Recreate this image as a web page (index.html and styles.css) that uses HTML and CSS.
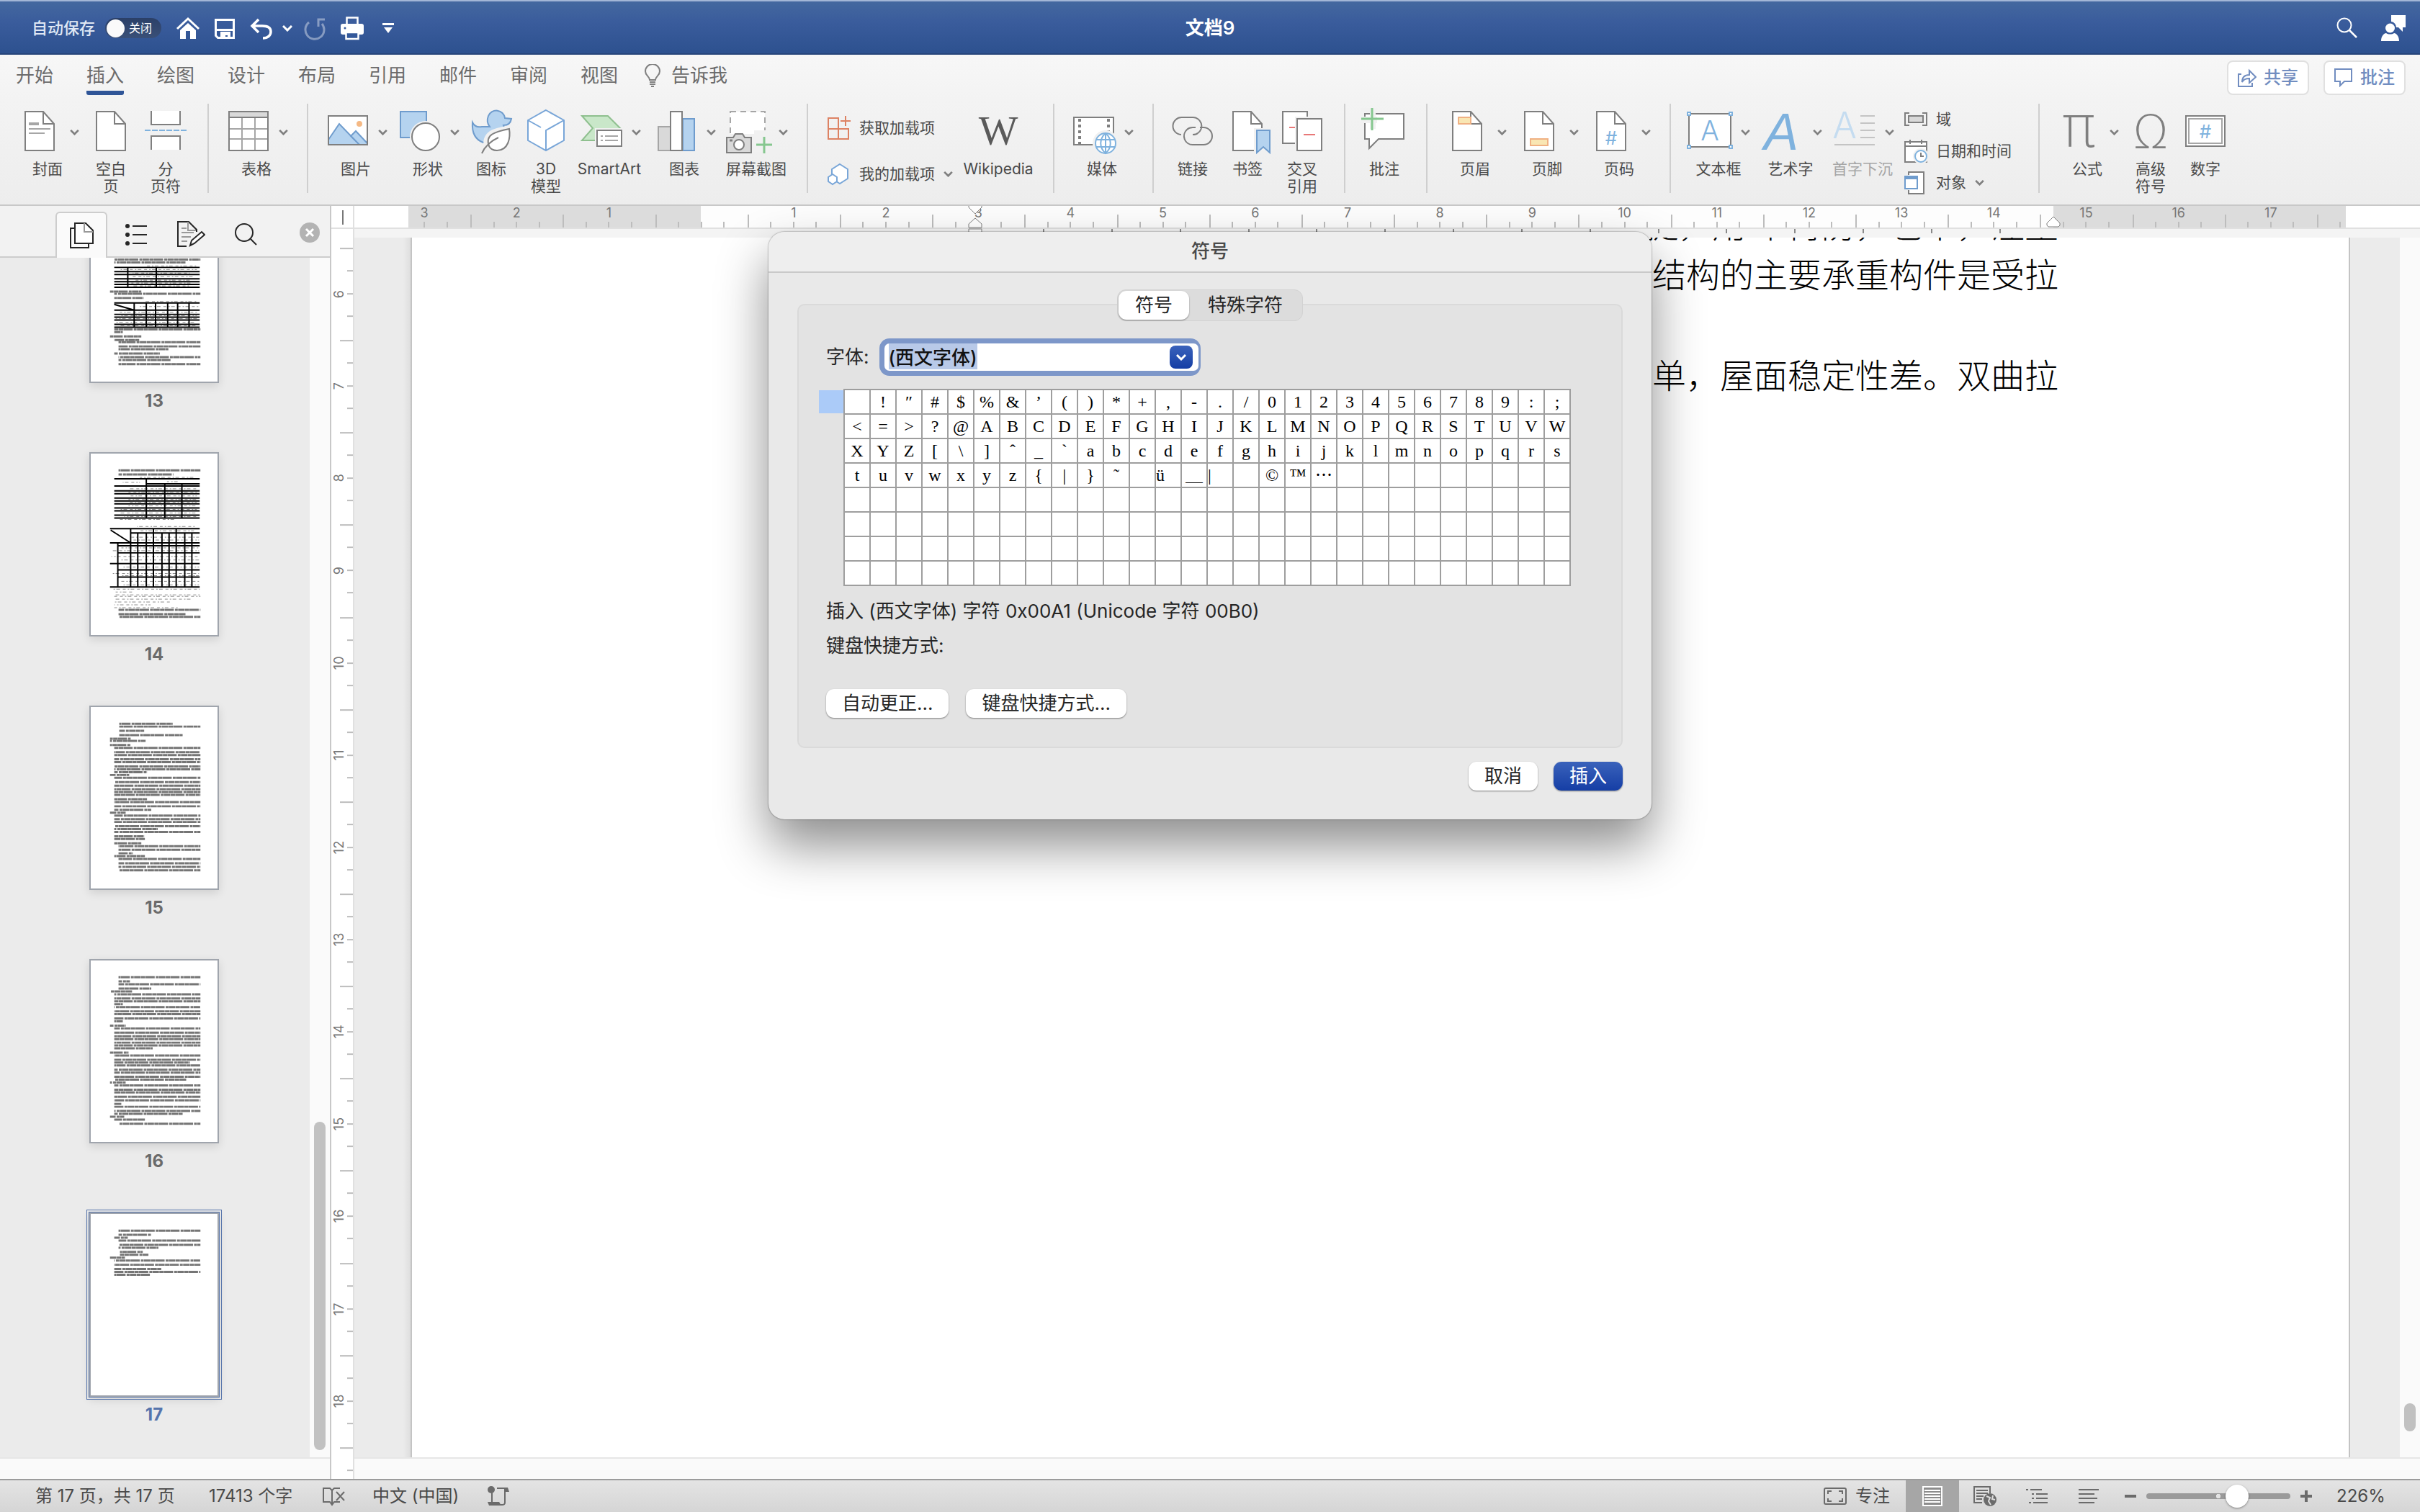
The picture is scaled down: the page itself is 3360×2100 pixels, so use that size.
FILE: index.html
```
<!DOCTYPE html>
<html lang="zh-CN">
<head>
    <meta charset="utf-8">
    <title>文档9</title>
    <meta name="viewport" content="width=device-width, initial-scale=1.0">
    <link rel="stylesheet" href="styles.css">
</head>
<body>
    <svg class="sprite" aria-hidden="true">
        <symbol id="chev" viewBox="0 0 14 9"><path d="M1 1l6 6 6-6" fill="none" stroke="currentColor" stroke-width="3"/></symbol>
        <symbol id="page" viewBox="0 0 56 64"><path d="M8 3h25l15 17v37H8z" fill="#fff" stroke="#7f7f7f" stroke-width="2"/><path d="M33 3v17h15" fill="none" stroke="#7f7f7f" stroke-width="2"/></symbol>
    </svg>

    <header class="titlebar">
        <label class="autosave" for="autosave">自动保存</label>
        <span class="switch"><input type="checkbox" id="autosave"><span>关闭</span></span>
        <button class="tb" aria-label="主页"><svg width="34" height="34" viewBox="0 0 34 34"><path d="M2 18L17 4l15 14" fill="none" stroke="#fff" stroke-width="3"/><path d="M6 20l11-10 11 10v12h-8V21h-6v11H6z" fill="#fff"/></svg></button>
        <button class="tb" aria-label="保存"><svg width="34" height="34" viewBox="0 0 34 34"><path d="M4.500 5.500h25v25h-22l-3-3z" fill="none" stroke="#fff" stroke-width="3"/><path d="M4 18h26v3H4zM11 22h14v10h-4v-5h-3v5h-7z" fill="#fff"/></svg></button>
        <button class="tb" aria-label="撤消"><svg width="34" height="34" viewBox="0 0 34 34"><path d="M13 5L4 14l9 9M4 14h14c8 0 12 3 12 8s-4 9-11 9" fill="none" stroke="#fff" stroke-width="3.500"/></svg></button>
        <button class="tb-chev" aria-label="撤消列表"><svg width="14" height="9"><use href="#chev"/></svg></button>
        <button class="tb dim" aria-label="重做"><svg width="34" height="34" viewBox="0 0 34 34"><path d="M8 9a13 13 0 1 0 18 2M30 5h-9v10" fill="none" stroke="#fff" stroke-width="3"/></svg></button>
        <button class="tb" aria-label="打印"><svg width="34" height="34" viewBox="0 0 34 34"><path d="M9.500 12V2.500h15V12" fill="none" stroke="#fff" stroke-width="2.500"/><rect x="1" y="11" width="32" height="15" rx="3" fill="#fff"/><rect x="8.500" y="23" width="17" height="9" fill="#33589a" stroke="#fff" stroke-width="2.500"/><circle cx="7" cy="17" r="1.500" fill="#33589a"/></svg></button>
        <button class="tb-more" aria-label="自定义工具栏"><svg width="16" height="16" viewBox="0 0 16 16"><path d="M0 1h16v3H0zM2 7h12l-6 8z" fill="#fff"/></svg></button>
        <h1>文档9</h1>
        <button class="tb-right" aria-label="搜索"><svg width="30" height="30" viewBox="0 0 30 30"><circle cx="11" cy="11" r="9.500" fill="none" stroke="#fff" stroke-width="2"/><path d="M18 18l10 10" stroke="#fff" stroke-width="2.500"/></svg></button>
        <button class="tb-right" aria-label="联系人"><svg width="36" height="38" viewBox="0 0 36 38"><path d="M14 1h20v17h-4v6l-6-6h-3a8 8 0 0 0-7-8z" fill="#fff"/><circle cx="12.500" cy="19" r="6.500" fill="#fff"/><path d="M0 37c0-7 4-11 7-11 3 2 8 2 11 0 3 0 7 4 7 11z" fill="#fff"/></svg></button>
    </header>

    <section class="ribbon">
        <nav class="tabs">
            <a href="#">开始</a>
            <a href="#" class="active">插入</a>
            <a href="#">绘图</a>
            <a href="#">设计</a>
            <a href="#">布局</a>
            <a href="#">引用</a>
            <a href="#">邮件</a>
            <a href="#">审阅</a>
            <a href="#">视图</a>
            <a href="#" class="tell"><svg width="24" height="32" viewBox="0 0 24 32"><path d="M8 22c0-5-6-6-6-12a10 10 0 0 1 20 0c0 6-6 7-6 12z" fill="none" stroke="#7f7f7f" stroke-width="2"/><path d="M8 25h8M8 28h8M10 31h4" stroke="#7f7f7f" stroke-width="2"/></svg>告诉我</a>
            <span class="spacer"></span>
            <button class="pill"><svg width="26" height="26" viewBox="0 0 26 26"><path d="M5 8H1v17h19v-5M6 19c0-7 4-10 10-10V3l9 9-9 8v-6c-5 0-8 1-10 5z" fill="none" stroke="currentColor" stroke-width="2"/></svg>共享</button>
            <button class="pill"><svg width="26" height="26" viewBox="0 0 26 26"><path d="M1 1h23v17H14l-6 6v-6H1z" fill="none" stroke="currentColor" stroke-width="2"/></svg>批注</button>
        </nav>

        <div class="tools">
            <div class="group">
                <button class="tool drop"><svg class="ico"><use href="#page"/><path d="M13 20h14" stroke="#a6a6a6" stroke-width="4"/><path d="M13 27h30M13 33h22" stroke="#a6a6a6" stroke-width="2"/></svg><svg class="chev"><use href="#chev"/></svg><span>封面</span></button>
                <button class="tool"><svg class="ico"><use href="#page"/></svg><span>空白<br>页</span></button>
                <button class="tool"><svg class="ico"><path d="M8 2v19h40V2M8 56V37h40v19" fill="#fff" stroke="#7f7f7f" stroke-width="2"/><path d="M-1 29h58" stroke="#7fb2de" stroke-width="2" stroke-dasharray="8 2"/></svg><span>分<br>页符</span></button>
            </div>
            <div class="group">
                <button class="tool drop"><svg class="ico"><rect x="1" y="3" width="54" height="54" fill="#fff"/><path d="M1 3h54v8H1z" fill="#d9d9d9"/><path d="M19 11v46M37 11v46M1 27h54M1 41h54" stroke="#a6a6a6" stroke-width="2"/><path d="M1 3h54v54H1zM1 11h54" fill="none" stroke="#7f7f7f" stroke-width="2"/></svg><svg class="chev"><use href="#chev"/></svg><span>表格</span></button>
            </div>
            <div class="group">
                <button class="tool drop"><svg class="ico"><rect x="1" y="9" width="54" height="40" fill="#fff"/><circle cx="44" cy="20" r="4" fill="#f5b985"/><path d="M1 42l15-22 28 29H1zM32 37l7-7 16 17v2H44z" fill="#b5d3ef" stroke="#6f9ccd" stroke-width="2"/><rect x="1" y="9" width="54" height="40" fill="none" stroke="#7f7f7f" stroke-width="2"/></svg><svg class="chev"><use href="#chev"/></svg><span>图片</span></button>
                <button class="tool drop"><svg class="ico"><rect x="1" y="3" width="36" height="36" fill="#b5d3ef" stroke="#6f9ccd" stroke-width="2"/><circle cx="36" cy="38" r="22" fill="#f1f1f1"/><circle cx="36" cy="38" r="19" fill="#fff" stroke="#7f7f7f" stroke-width="2"/></svg><svg class="chev"><use href="#chev"/></svg><span>形状</span></button>
                <button class="tool"><svg class="ico"><path d="M2 18c3 6 8 7 13 6h11c-4-5-4-10-2-15a12 12 0 0 1 23 3l9 1c-1 6-5 9-11 9 3 8 2 14-4 18L17 46C6 42 1 32 2 18z" fill="#b5d3ef" stroke="#6f9ccd" stroke-width="2"/><path d="M22 52c-4-18 10-23 31-25 2 12-1 30-17 30-5 0-9-2-11-5" fill="#fff" stroke="#f1f1f1" stroke-width="8"/><path d="M25 51c-6-16 8-20 28-24 2 12-1 30-17 30-5 0-9-2-11-6z" fill="#fff" stroke="#7f7f7f" stroke-width="2"/><path d="M15 61c4-9 12-17 23-22" fill="none" stroke="#7f7f7f" stroke-width="2"/></svg><span>图标</span></button>
                <button class="tool"><svg class="ico"><path d="M28 1l25 14v28L28 57 3 43V15z" fill="#fff" stroke="#79a6d8" stroke-width="2"/><path d="M3 15l18 10M28 57V29l25-14" fill="none" stroke="#79a6d8" stroke-width="2"/></svg><span>3D<br>模型</span></button>
                <button class="tool drop wide"><svg class="ico"><path d="M1 9h36l17 17-17 17H1l15-17z" fill="#c9e7c9" stroke="#8fc08f" stroke-width="2"/><rect x="19" y="26" width="41" height="28" fill="#f1f1f1"/><rect x="22" y="29" width="34" height="22" fill="#fff" stroke="#7f7f7f" stroke-width="2"/><path d="M27 37h3M33 37h18M27 43h3M33 43h18" stroke="#a6a6a6" stroke-width="2"/></svg><svg class="chev"><use href="#chev"/></svg><span>SmartArt</span></button>
                <button class="tool drop"><svg class="ico"><rect x="3" y="24" width="17" height="33" fill="#d9d9d9" stroke="#a6a6a6" stroke-width="2"/><rect x="37" y="13" width="16" height="44" fill="#b5d3ef" stroke="#6f9ccd" stroke-width="2"/><rect x="20" y="3" width="16" height="54" fill="#fff" stroke="#7f7f7f" stroke-width="2"/></svg><svg class="chev"><use href="#chev"/></svg><span>图表</span></button>
                <button class="tool drop"><svg class="ico"><path d="M3 3h48v44H3z" fill="#fff" stroke="#a6a6a6" stroke-width="2" stroke-dasharray="8 6"/><path d="M-5 34h41v-5h20v30H-5z" fill="#f1f1f1"/><path d="M-2 39h9l3-5h10l3 5h9v21H-2z" fill="#d9d9d9" stroke="#7f7f7f" stroke-width="2"/><circle cx="15" cy="49" r="7" fill="#fff" stroke="#7f7f7f" stroke-width="2"/><path d="M2 43h4" stroke="#7f7f7f" stroke-width="3"/><path d="M50 38v23M39 49h22" stroke="#86c78f" stroke-width="3"/></svg><svg class="chev"><use href="#chev"/></svg><span>屏幕截图</span></button>
            </div>
            <div class="group">
                <div class="stack two">
                    <button class="row"><svg width="32" height="34" viewBox="0 0 32 34"><path d="M1 3h14v15H1zM1 18h14v14H1zM15 18h14v14H15zM25 0v14M18 7h14" fill="none" stroke="#dd8263" stroke-width="2"/></svg>获取加载项</button>
                    <button class="row"><svg width="32" height="34" viewBox="0 0 32 34"><path d="M17 3l11 7v13l-11 7-11-7V10z" fill="#fff" stroke="#79a6d8" stroke-width="2"/><path d="M7 17l6 4v6l-6 4-6-4v-6z" fill="#fff" stroke="#79a6d8" stroke-width="2"/></svg>我的加载项<svg class="chev"><use href="#chev"/></svg></button>
                </div>
                <button class="tool wiki"><svg class="ico"><text x="28" y="49" font-size="58" text-anchor="middle" class="serif">W</text></svg><span>Wikipedia</span></button>
            </div>
            <div class="group">
                <button class="tool drop"><svg class="ico"><rect x="0" y="11" width="55" height="38" fill="#fff" stroke="#7f7f7f" stroke-width="2"/><path d="M8 13v36M48 13v20" stroke="#7f7f7f" stroke-width="4" stroke-dasharray="4 4"/><circle cx="44" cy="47" r="18" fill="#f1f1f1"/><circle cx="44" cy="47" r="14" fill="#fff" stroke="#7fb2de" stroke-width="2"/><path d="M44 33v28M31 42h26M31 52h26M44 33c-9 8-9 20 0 28 9-8 9-20 0-28" fill="none" stroke="#7fb2de" stroke-width="2"/></svg><svg class="chev"><use href="#chev"/></svg><span>媒体</span></button>
            </div>
            <div class="group">
                <button class="tool"><svg class="ico"><g fill="none" stroke="#7f7f7f" stroke-width="2"><path d="M12 35a12 12 0 0 1 1-24h15a12 12 0 0 1 7 22q-2 2-7 2"/><path d="M38 25h5a12 12 0 0 1 0 24H28a12 12 0 0 1-8-21q3-3 8-3h4"/></g></svg><span>链接</span></button>
                <button class="tool"><svg class="ico"><use href="#page"/><path d="M37 26h26v32H37z" fill="#f1f1f1"/><path d="M41 29h18v31l-9-8-9 8z" fill="#b5d3ef" stroke="#6f9ccd" stroke-width="2"/></svg><span>书签</span></button>
                <button class="tool"><svg class="ico"><rect x="1" y="3" width="34" height="44" fill="#fff" stroke="#7f7f7f" stroke-width="2"/><path d="M18 10h22v40H18z" fill="#f1f1f1"/><rect x="21" y="13" width="34" height="44" fill="#fff" stroke="#7f7f7f" stroke-width="2"/><path d="M10 25h8M30 35h16" stroke="#e87878" stroke-width="2"/></svg><span>交叉<br>引用</span></button>
            </div>
            <div class="group">
                <button class="tool"><svg class="ico"><path d="M1 6h54v35H20L7 54V41H1z" fill="#fff" stroke="#7f7f7f" stroke-width="2"/><path d="M-4 3h22v-5h-22zM-4 10h22v9H-4zM8 3h8v24H8z" fill="#f1f1f1"/><path d="M11-2v31M-4 13h31" stroke="#86c78f" stroke-width="3"/></svg><span>批注</span></button>
            </div>
            <div class="group">
                <button class="tool drop"><svg class="ico"><use href="#page"/><path d="M16 11h17v9H16z" fill="#f9e6b3" stroke="#f0b183" stroke-width="2"/></svg><svg class="chev"><use href="#chev"/></svg><span>页眉</span></button>
                <button class="tool drop"><svg class="ico"><use href="#page"/><path d="M16 41h24v9H16z" fill="#f9e6b3" stroke="#f0b183" stroke-width="2"/></svg><svg class="chev"><use href="#chev"/></svg><span>页脚</span></button>
                <button class="tool drop"><svg class="ico"><use href="#page"/><text x="28" y="49" font-size="26" text-anchor="middle" class="blue">#</text></svg><svg class="chev"><use href="#chev"/></svg><span>页码</span></button>
            </div>
            <div class="group">
                <button class="tool drop"><svg class="ico"><rect x="-2" y="6" width="58" height="46" fill="#fff" stroke="#7f7f7f" stroke-width="2"/><text x="27" y="43" font-size="38" text-anchor="middle" class="blue thin">A</text><path d="M-4 4h4v4h-4zM54 4h4v4h-4zM-4 50h4v4h-4zM54 50h4v4h-4z" fill="#fff" stroke="#7fb2de" stroke-width="2"/></svg><svg class="chev"><use href="#chev"/></svg><span>文本框</span></button>
                <button class="tool drop"><svg class="ico"><text x="26" y="56" font-size="72" text-anchor="middle" class="blue art">A</text></svg><svg class="chev"><use href="#chev"/></svg><span>艺术字</span></button>
                <button class="tool drop" disabled><svg class="ico"><text x="14" y="40" font-size="50" text-anchor="middle" class="pale thin">A</text><path d="M36 9h20M36 19h20M36 29h20M36 39h20M0 49h56" stroke="#c4c4c4" stroke-width="2"/></svg><svg class="chev"><use href="#chev"/></svg><span>首字下沉</span></button>
                <div class="stack three">
                    <button class="row"><svg width="32" height="34" viewBox="0 0 32 34"><path d="M7 8H1v17h6M25 8h6v17h-6" fill="none" stroke="#7f7f7f" stroke-width="2"/><rect x="6" y="12" width="20" height="9" fill="#d9d9d9" stroke="#7f7f7f" stroke-width="2"/></svg>域</button>
                    <button class="row"><svg width="32" height="34" viewBox="0 0 32 34"><path d="M1 4h30v28H1z" fill="#fff" stroke="#7f7f7f" stroke-width="2"/><path d="M1 10h30M8 1v6M24 1v6" stroke="#7f7f7f" stroke-width="2"/><circle cx="23" cy="24" r="11" fill="#f1f1f1"/><circle cx="23" cy="24" r="8" fill="#fff" stroke="#7fb2de" stroke-width="2"/><path d="M23 19v5h4" fill="none" stroke="#7f7f7f" stroke-width="2"/></svg>日期和时间</button>
                    <button class="row"><svg width="32" height="34" viewBox="0 0 32 34"><path d="M6 6V2h21v30H6v-5" fill="#fff" stroke="#7f7f7f" stroke-width="2"/><rect x="1" y="8" width="17" height="17" fill="#fff" stroke="#6f9ccd" stroke-width="2"/><path d="M1 10h17" stroke="#6f9ccd" stroke-width="4"/></svg>对象<svg class="chev"><use href="#chev"/></svg></button>
                </div>
            </div>
            <div class="group last">
                <button class="tool drop"><svg class="ico"><text x="27" y="52" font-size="80" text-anchor="middle" class="greek">π</text></svg><svg class="chev"><use href="#chev"/></svg><span>公式</span></button>
                <button class="tool"><svg class="ico"><text x="28" y="54" font-size="64" text-anchor="middle" class="greek">Ω</text></svg><span>高级<br>符号</span></button>
                <button class="tool"><svg class="ico"><rect x="1" y="9" width="54" height="42" fill="#fff" stroke="#7f7f7f" stroke-width="2"/><rect x="5" y="13" width="46" height="34" fill="none" stroke="#a6a6a6" stroke-width="2"/><text x="28" y="40" font-size="26" text-anchor="middle" class="blue">#</text></svg><span>数字</span></button>
            </div>
        </div>
    </section>

    <main class="workspace">
        <aside class="sidebar">
            <div class="side-tabs">
                <button class="side-tab active" aria-label="缩略图"><svg width="36" height="38" viewBox="0 0 36 38"><path d="M9 9H3v27h25v-5" fill="none" stroke="#262626" stroke-width="2"/><path d="M9 2h15l10 10v18H9z" fill="#fff" stroke="#262626" stroke-width="2"/><path d="M22 2v12h12" fill="none" stroke="#999" stroke-width="2"/></svg></button>
                <button class="side-tab" aria-label="文档结构"><svg width="36" height="38" viewBox="0 0 36 38"><path d="M13 8h20M13 20h20M13 32h20" stroke="#262626" stroke-width="2"/><circle cx="6" cy="8" r="3" fill="#262626"/><circle cx="6" cy="20" r="3" fill="#262626"/><circle cx="6" cy="32" r="3" fill="#262626"/></svg></button>
                <button class="side-tab" aria-label="审阅"><svg width="40" height="38" viewBox="0 0 40 38"><path d="M14 36H2V2h15l11 11v3" fill="none" stroke="#262626" stroke-width="2"/><path d="M16 2v12h11M7 11h7M7 17h17M7 23h13M7 29h8" fill="none" stroke="#999" stroke-width="2"/><path d="M19 35l2-7 14-12 4 4-14 12z" fill="#fff" stroke="#262626" stroke-width="2"/></svg></button>
                <button class="side-tab" aria-label="查找"><svg width="36" height="38" viewBox="0 0 36 38"><circle cx="16" cy="17" r="12" fill="none" stroke="#262626" stroke-width="2"/><path d="M25 26l8 8" stroke="#262626" stroke-width="2"/></svg></button>
                <button class="side-close" aria-label="关闭"><svg width="28" height="28" viewBox="0 0 28 28"><circle cx="14" cy="14" r="14" fill="#b3b3b3"/><path d="M9 9l10 10M19 9L9 19" stroke="#fff" stroke-width="3"/></svg></button>
            </div>
            <div class="side-body">
                <div class="thumbs" id="thumbs"></div>
                <div class="vscroll"><i></i></div>
            </div>
            <div class="hscroll"></div>
        </aside>

        <div class="vruler">
            <div class="corner"></div>
            <div class="vscale" id="vscale"></div>
        </div>

        <div class="editor">
            <div class="hruler">
                <div class="zones"><i class="out"></i><i class="in"></i><i class="out"></i></div>
                <div class="clip">
                    <div class="hscale" id="hscale"></div>
                </div>
                <svg class="marker indent" width="20" height="36" viewBox="0 0 20 36"><path d="M1-1v3l9 9 9-9v-3z" fill="#fff" stroke="#7f7f7f"/><path d="M10 17l9 8v5H1v-5zM1 32h18v8H1z" fill="#fff" stroke="#7f7f7f"/></svg>
                <svg class="marker right" width="20" height="16" viewBox="0 0 20 16"><path d="M10 1l9 9v3l-2 2H3l-2-2v-3z" fill="#fff" stroke="#7f7f7f"/></svg>
            </div>
            <div class="tabstops" id="tabstops"></div>
            <div class="canvas">
                <article class="sheet">
                    <p>，提，用 中再防，也不，注重</p>
                    <p>结构的主要承重构件是受拉</p>
                    <p>&nbsp;</p>
                    <p>简单，屋面稳定性差。双曲拉</p>
                </article>
                <div class="vscroll doc"><i></i></div>
            </div>
            <div class="hscroll"></div>
        </div>
    </main>

    <footer class="status">
        <span class="pages">第 17 页，共 17 页</span>
        <span class="words">17413 个字</span>
        <svg class="proof" width="32" height="28" viewBox="0 0 32 28"><path d="M24 3h-8l-3 3-3-3H1v19h9l3 4 3-4h8M13 6v19M19 8l11 12M30 8L19 20" fill="none" stroke="#6b6b6b" stroke-width="2"/></svg>
        <span class="lang">中文 (中国)</span>
        <svg width="32" height="30" viewBox="0 0 32 30"><circle cx="6" cy="6" r="5" fill="#6b6b6b"/><path d="M7 10v13M14 4h14v4M25 4v20q0 3-4 3H4" fill="none" stroke="#6b6b6b" stroke-width="2"/><path d="M1 23h16l3 5H3zM24 3h5l2 6h-5z" fill="#6b6b6b"/></svg>
        <span class="spacer"></span>
        <button class="focus"><svg width="32" height="24" viewBox="0 0 32 24"><rect x="1" y="1" width="30" height="22" rx="2" fill="none" stroke="#6b6b6b" stroke-width="2"/><path d="M6 9V5h5M21 5h5v4M6 15v4h5M21 19h5v-4" fill="none" stroke="#6b6b6b" stroke-width="2"/></svg>专注</button>
        <button class="view on" aria-label="页面视图"><svg width="32" height="30" viewBox="0 0 32 30"><path d="M3 2h26v26H3z" fill="#8c8c8c" stroke="#fff" stroke-width="2"/><path d="M5 7h22M5 11h22M5 15h22M5 19h22M5 23h22" stroke="#fff" stroke-width="2"/></svg></button>
        <button class="view" aria-label="Web 版式"><svg width="32" height="30" viewBox="0 0 32 30"><path d="M12 24H1V2h22v9" fill="none" stroke="#6b6b6b" stroke-width="2"/><path d="M4 7h16M4 11h16M4 15h10M4 19h8" stroke="#6b6b6b" stroke-width="2"/><circle cx="23" cy="20" r="9" fill="#6b6b6b"/><path d="M18 15l5 2-2 5 3 5M27 14l-1 5 4 1" fill="none" stroke="#dedede" stroke-width="2"/></svg></button>
        <button class="view" aria-label="大纲"><svg width="32" height="30" viewBox="0 0 32 30"><path d="M1 6h3M7 6h16M9 12h3M15 12h16M9 18h3M15 18h16M5 24h3M11 24h20" stroke="#6b6b6b" stroke-width="2"/></svg></button>
        <button class="view" aria-label="草稿"><svg width="32" height="30" viewBox="0 0 32 30"><path d="M2 6h28M2 12h22M2 18h26M2 24h22" stroke="#6b6b6b" stroke-width="2"/></svg></button>
        <button class="zoom-btn" aria-label="缩小"><svg width="16" height="16"><path d="M0 8h16" stroke="#6b6b6b" stroke-width="4"/></svg></button>
        <input type="range" class="zoom" min="10" max="340" value="226" aria-label="缩放">
        <button class="zoom-btn" aria-label="放大"><svg width="16" height="16"><path d="M0 8h16M8 0v16" stroke="#6b6b6b" stroke-width="4"/></svg></button>
        <span class="percent">226%</span>
    </footer>

    <div class="dialog" role="dialog" aria-labelledby="dlg-title">
        <h2 id="dlg-title">符号</h2>
        <div class="box">
            <div class="seg">
                <button class="on">符号</button>
                <button>特殊字符</button>
            </div>
            <div class="font-row">
                <label for="font">字体:</label>
                <div class="combo">
                    <input type="text" id="font" value="(西文字体)">
                    <button aria-label="选择字体"><svg width="14" height="9"><use href="#chev"/></svg></button>
                </div>
            </div>
            <div class="symbols">
                <i class="picked"></i>
                <table id="symbols"></table>
            </div>
            <p>插入 (西文字体) 字符 0x00A1 (Unicode 字符 00B0)</p>
            <p>键盘快捷方式:</p>
            <div class="btns">
                <button class="btn">自动更正...</button>
                <button class="btn">键盘快捷方式...</button>
            </div>
        </div>
        <div class="actions">
            <button class="btn">取消</button>
            <button class="btn primary">插入</button>
        </div>
    </div>

    <script src="main.js"></script>
</body>
</html>
```

FILE: styles.css
```
* {
    box-sizing: border-box;
}

body {
    margin: 0;
    height: 100vh;
    display: flex;
    flex-direction: column;
    overflow: hidden;
    position: relative;
    font-family: Inter, "Noto Sans CJK SC", sans-serif;
    color: #4a4a4a;
    background: #ebebeb;
}

button {
    margin: 0;
    padding: 0;
    border: none;
    background: none;
    font: inherit;
    color: inherit;
}

.sprite {
    position: absolute;
    width: 0;
    height: 0;
}

.spacer {
    flex: 1;
}

/* title bar */
.titlebar {
    height: 76px;
    flex: none;
    display: flex;
    align-items: center;
    padding: 4px 18px 2px 44px;
    position: relative;
    color: #fff;
    background: linear-gradient(#44689f, #3a5c9c 40%, #2d518f);
    border-top: 2px solid #a3b6d6;
    border-bottom: 2px solid #27447a;
}

.autosave {
    width: 102px;
    font-size: 22px;
    font-weight: 500;
    line-height: 32px;
    color: #dfe7f4;
}

.switch {
    width: 78px;
    height: 28px;
    display: flex;
    align-items: center;
    margin-right: 20px;
    padding-left: 2px;
    border-radius: 14px;
    background: linear-gradient(#2b4068, #3a5078);
    font-size: 16px;
    line-height: 24px;
}

.switch input {
    appearance: none;
    width: 25px;
    height: 25px;
    margin: 0 6px 0 0;
    border-radius: 50%;
    background: #fafafa;
}

.tb {
    width: 34px;
    height: 34px;
    margin-right: 17px;
}

.tb svg,
.tb-chev svg,
.tb-more svg,
.tb-right svg {
    display: block;
}

.tb:nth-of-type(3) {
    margin-right: 12px;
}

.tb-chev {
    margin-right: 15px;
}

.tb-more {
    margin-left: 8px;
}

.dim {
    opacity: .4;
}

.titlebar h1 {
    position: absolute;
    left: 0;
    right: 0;
    margin: 0;
    text-align: center;
    font-size: 26px;
    font-weight: 600;
    line-height: 36px;
    pointer-events: none;
}

.tb-right {
    margin-left: 32px;
}

.tb-more + h1 + .tb-right {
    margin-left: auto;
}

/* ribbon */
.ribbon {
    flex: none;
    background: linear-gradient(#f7f7f7, #f3f3f3 30%, #ededed);
    border-bottom: 2px solid #c8c8c8;
}

.tabs {
    height: 68px;
    display: flex;
    align-items: flex-start;
    padding: 0 20px 0 22px;
    font-size: 26px;
    line-height: 36px;
    color: #666;
}

.tabs a {
    width: 52px;
    margin-right: 46px;
    padding: 11px 0 3px;
    color: #6b6b6b;
    text-decoration: none;
    white-space: nowrap;
    border-bottom: 6px solid transparent;
}

.tabs .active {
    border-color: #2f5597;
    border-radius: 3px;
}

.tabs .tell {
    width: auto;
    display: flex;
    align-items: center;
    gap: 14px;
    margin-left: -10px;
}

.pill {
    width: 114px;
    height: 48px;
    display: flex;
    align-items: center;
    justify-content: center;
    gap: 10px;
    margin: 8px 0 0 20px;
    font-size: 24px;
    font-weight: 500;
    color: #718dc0;
    background: #fff;
    border: 2px solid #e0e0e0;
    border-radius: 8px;
}

.tools {
    height: 140px;
    display: flex;
    padding-bottom: 16px;
}

.group {
    display: flex;
    height: 124px;
    padding: 0 20px 0 16px;
    border-right: 2px solid #cfcfcf;
}

.group.last {
    border: none;
}

.tool {
    width: 76px;
    display: grid;
    grid-template-columns: 56px;
    grid-template-rows: 64px auto;
    row-gap: 7px;
    align-content: start;
    justify-content: center;
    padding-top: 8px;
    font-size: 21px;
    line-height: 24px;
}

.tool.drop {
    width: 100px;
    grid-template-columns: 56px 13px;
    column-gap: 14px;
    justify-content: start;
    padding-left: 11px;
}

.tool.wide {
    width: 104px;
}

.tool span {
    grid-column: 1 / -1;
    justify-self: center;
    white-space: nowrap;
    display: flow-root;
}

.tool.drop span {
    margin-left: -5px;
}

.tool:disabled {
    color: #a6a6a6;
}

.ico {
    width: 56px;
    height: 64px;
    overflow: visible;
}

.chev {
    width: 13px;
    height: 8px;
    align-self: center;
    color: #7f7f7f;
}

.wiki {
    width: 112px;
}

.serif {
    font-family: "Liberation Serif", serif;
    fill: #5a5a5a;
}

.greek {
    font-family: "DejaVu Sans", sans-serif;
    font-weight: 200;
    fill: #7f7f7f;
}

.blue {
    fill: #7fb2de;
}

.pale {
    fill: #c5dcf0;
}

.thin {
    font-weight: 300;
}

.art {
    font-style: italic;
    font-family: "Liberation Sans", sans-serif;
}

.stack {
    display: flex;
    flex-direction: column;
    padding: 0 0 0 11px;
    font-size: 21px;
}

.stack.two {
    width: 192px;
    padding-top: 17px;
    gap: 30px;
}

.stack.three {
    width: 174px;
    padding: 5px 0 0 8px;
    gap: 10px;
}

.row {
    height: 34px;
    display: flex;
    align-items: center;
    gap: 12px;
    line-height: 34px;
    white-space: nowrap;
}

/* workspace */
.workspace {
    flex: 1;
    min-height: 0;
    display: flex;
}

.sidebar {
    width: 460px;
    display: flex;
    flex-direction: column;
    border-right: 2px solid #c8c8c8;
}

.side-tabs {
    height: 72px;
    flex: none;
    display: flex;
    align-items: flex-end;
    padding: 0 14px 0 77px;
    background: #f2f2f2;
    border-bottom: 2px solid #cdcdcd;
}

.side-tab {
    width: 72px;
    height: 62px;
    padding-top: 4px;
    margin-right: 4px;
}

.side-tab.active {
    margin-bottom: -2px;
    height: 64px;
    background: #fafafa;
    border: 2px solid #cdcdcd;
    border-bottom: none;
    border-radius: 6px 6px 0 0;
}

.side-close {
    margin: 0 0 15px auto;
}

.side-body {
    flex: 1;
    min-height: 0;
    display: flex;
}

.thumbs {
    flex: 1;
    display: flex;
    flex-direction: column;
    align-items: center;
    justify-content: flex-end;
    gap: 46px;
    padding: 0 2px 34px 0;
    overflow: hidden;
}

.thumb {
    flex: none;
    font-size: 24px;
    font-weight: 700;
    line-height: 50px;
    text-align: center;
    color: #6b6b6b;
}

.thumb svg {
    display: block;
    width: 180px;
    height: 256px;
    background: #fff;
    border: 2px solid #a0a5ad;
    box-shadow: 0 4px 12px rgba(0,0,0,0.12);
}

.thumb.current {
    color: #5674ab;
}

.thumb.current svg {
    outline: 4px double #5674ab;
}

.vscroll {
    width: 28px;
    flex: none;
    display: flex;
    flex-direction: column;
    justify-content: flex-end;
    align-items: center;
    padding-bottom: 10px;
    background: #fafafa;
}

.vscroll i {
    width: 16px;
    height: 456px;
    border-radius: 8px;
    background: #c1c1c1;
}

.vscroll.doc {
    padding-bottom: 36px;
}

.vscroll.doc i {
    height: 39px;
}

.hscroll {
    height: 30px;
    flex: none;
    background: #fafafa;
    border-top: 2px solid #e6e6e6;
}

/* rulers */
.vruler {
    width: 32px;
    flex: none;
    display: flex;
    flex-direction: column;
    background: #fff;
    border-right: 2px solid #e0e0e0;
    overflow: hidden;
}

.corner {
    height: 32px;
    flex: none;
    border-bottom: 2px solid #e0e0e0;
    background: linear-gradient(#777, #777) 15px 6px / 2px 20px no-repeat;
}

.vscale {
    height: 1794px;
    flex: none;
    display: flex;
    flex-direction: column;
    margin-top: 26px;
    font-size: 18px;
    color: #777;
}

.vscale span {
    flex: 1;
    display: flex;
    align-items: center;
    justify-content: center;
    padding-left: 8px;
    writing-mode: vertical-rl;
    transform: rotate(180deg);
    line-height: 22px;
    background:
        linear-gradient(#bdbdbd, #bdbdbd) 0 100% / 18px 2px no-repeat,
        linear-gradient(#bdbdbd, #bdbdbd) 0 25% / 8px 2px no-repeat,
        linear-gradient(#bdbdbd, #bdbdbd) 0 50% / 8px 2px no-repeat,
        linear-gradient(#bdbdbd, #bdbdbd) 0 75% / 8px 2px no-repeat;
}

.editor {
    flex: 1;
    min-width: 0;
    display: flex;
    flex-direction: column;
}

.hruler {
    height: 32px;
    flex: none;
    position: relative;
    padding: 0 103px 0 75px;
    background: #fff;
    border-bottom: 2px solid #e0e0e0;
}

.zones {
    display: flex;
    height: 30px;
}

.zones .out {
    width: 406px;
    background: #dcdcdc;
}

.zones .in {
    flex: 1;
    background: #fdfdfd;
}

.clip {
    height: 30px;
    margin-top: -30px;
    overflow: hidden;
}

.hscale {
    width: 2820px;
    height: 30px;
    display: flex;
    margin-left: -42px;
    font-size: 18px;
    line-height: 20px;
    color: #777;
}

.hscale span {
    flex: 1;
    text-align: center;
    background:
        linear-gradient(#bdbdbd, #bdbdbd) 0 100% / 2px 18px no-repeat,
        linear-gradient(#bdbdbd, #bdbdbd) 25% 100% / 2px 8px no-repeat,
        linear-gradient(#bdbdbd, #bdbdbd) 50% 100% / 2px 8px no-repeat,
        linear-gradient(#bdbdbd, #bdbdbd) 75% 100% / 2px 8px no-repeat;
}

.marker {
    position: absolute;
    overflow: hidden;
}

.marker.indent {
    left: 852px;
    top: 0;
}

.marker.right {
    right: 499px;
    bottom: 0;
}

.tabstops {
    height: 12px;
    flex: none;
    display: flex;
    justify-content: space-between;
    padding: 0 582px 0 956px;
    background: #f4f4f4;
}

.tabstops i {
    width: 2px;
    height: 6px;
    background: #8a8a8a;
}

.canvas {
    flex: 1;
    min-height: 0;
    display: flex;
    margin-left: 12px;
    padding-left: 66px;
    background: linear-gradient(90deg, #ebebeb 56px, #dedede 66px, #ebebeb 67px);
}

.sheet {
    flex: 1;
    margin-right: 69px;
    padding-right: 403px;
    background: #fff;
    border: solid #c4c4c4;
    border-width: 0 2px;
    overflow: hidden;
    text-align: right;
    font-family: "Songti SC", SimSun, "Noto Sans CJK SC", serif;
    font-weight: 300;
    font-size: 47px;
    color: #000;
}

.sheet p {
    margin: 0;
    line-height: 70px;
    white-space: nowrap;
}

.sheet p:first-child {
    height: 14px;
    line-height: 0;
    padding-top: 0;
    margin-top: -20px;
    margin-bottom: 20px;
}

/* status bar */
.status {
    height: 46px;
    flex: none;
    display: flex;
    align-items: center;
    padding: 0 50px 0 49px;
    font-size: 24px;
    line-height: 36px;
    white-space: nowrap;
    background: linear-gradient(#e4e4e4, #d5d5d5);
    border-top: 2px solid #9c9c9c;
}

.pages {
    width: 241px;
}

.words {
    width: 158px;
}

.lang {
    width: 159px;
    margin-left: 37px;
}

.focus {
    display: flex;
    align-items: center;
    gap: 12px;
    margin-right: 22px;
}

.view {
    width: 72px;
    height: 44px;
    display: flex;
    align-items: center;
    justify-content: center;
}

.view.on {
    width: 74px;
    background: #a6a6a6;
}

.view:last-of-type {
    margin-right: 16px;
}

.zoom-btn {
    margin: 0 14px;
    height: 16px;
    display: flex;
}

.zoom {
    appearance: none;
    width: 200px;
    height: 32px;
    margin: 0;
    background: none;
}

.zoom::-webkit-slider-runnable-track {
    height: 8px;
    border-radius: 4px;
    background: radial-gradient(circle at 50% 50%, #e4e4e4 3px, #9a9a9a 3px);
}

.zoom::-webkit-slider-thumb {
    appearance: none;
    width: 32px;
    height: 32px;
    margin-top: -12px;
    border-radius: 50%;
    background: #fff;
    box-shadow: 0 1px 3px rgba(0,0,0,0.4);
}

.percent {
    width: 66px;
    margin-left: 20px;
}

/* symbol dialog */
.dialog {
    position: absolute;
    top: 322px;
    left: 0;
    right: 0;
    width: 1226px;
    margin: 0 auto;
    padding-bottom: 40px;
    font-size: 26px;
    line-height: 36px;
    color: #262626;
    background: #e9e9e9;
    border-radius: 22px;
    box-shadow: 0 0 2px rgba(0,0,0,0.6), 0 36px 70px rgba(0,0,0,0.45);
}

.dialog h2 {
    margin: 0;
    padding: 8px 0 11px;
    height: 57px;
    text-align: center;
    font-size: 26px;
    font-weight: 500;
    line-height: 38px;
    color: #4a4a4a;
    background: #eee;
    border-bottom: 2px solid #c9c9c9;
    border-radius: 22px 22px 0 0;
}

.box {
    margin: 43px 40px 0;
    padding: 0 38px 40px;
    background: #e3e3e3;
    border: 2px solid #dadada;
    border-radius: 10px;
}

.seg {
    display: flex;
    width: 258px;
    height: 44px;
    margin: -22px auto 24px;
    padding: 1px;
    background: #dcdcdc;
    border: 1px solid #d2d2d2;
    border-radius: 12px;
}

.seg button {
    flex: 1;
}

.seg .on {
    flex: none;
    width: 98px;
    background: #fff;
    border-radius: 11px;
    box-shadow: 0 1px 2px rgba(0,0,0,0.4);
}

.font-row {
    display: flex;
    align-items: center;
    gap: 14px;
}

.combo {
    width: 446px;
    height: 52px;
    display: flex;
    align-items: center;
    padding: 7px;
    background: #7d97c9;
    border-radius: 14px;
}

.combo input {
    flex: 1;
    min-width: 0;
    height: 38px;
    margin-right: -40px;
    padding: 0 44px 3px 6px;
    border: none;
    outline: none;
    border-radius: 7px;
    background: #fff;
    font: inherit;
    font-weight: 500;
    line-height: 32px;
    color: #111;
}

.combo input::selection {
    background: #b8c9e8;
    color: #111;
}

.combo button {
    width: 32px;
    height: 32px;
    margin-right: 4px;
    border-radius: 8px;
    color: #fff;
    display: flex;
    align-items: center;
    justify-content: center;
    background: linear-gradient(#3a62bb, #153ea5);
}

.symbols {
    display: flex;
    margin: 18px 0 17px -10px;
}

.picked {
    width: 34px;
    height: 32px;
    margin-top: 2px;
    background: #abcbf8;
}

.symbols table {
    border-collapse: collapse;
    table-layout: fixed;
    width: 1010px;
    background: #fff;
    font-family: "Liberation Serif", serif;
    font-size: 24px;
    line-height: 32px;
    color: #000;
}

.symbols td {
    height: 34px;
    padding: 0;
    border: 2px solid #9e9e9e;
    text-align: center;
}

.symbols .left {
    text-align: left;
}

.box p {
    margin: 0 0 12px;
}

.btns {
    display: flex;
    gap: 24px;
    margin-top: 42px;
}

.btn {
    height: 40px;
    padding: 0 22px;
    line-height: 38px;
    background: #fff;
    border-radius: 11px;
    box-shadow: 0 1px 2px rgba(0,0,0,0.45);
}

.primary {
    color: #fff;
    background: linear-gradient(#3a62bb, #153ea5);
}

.actions {
    display: flex;
    justify-content: flex-end;
    gap: 22px;
    padding: 19px 40px 0;
}
```

FILE: main.js
```
// rulers
const hscale = document.getElementById('hscale');
[3, 2, 1, ''].concat(range(1, 17), '').forEach(n => addSpan(hscale, n));

const vscale = document.getElementById('vscale');
range(6, 18).concat('').forEach(n => addSpan(vscale, n));

const stops = document.getElementById('tabstops');
for (let i = 0; i < 15; i++) {
    stops.appendChild(document.createElement('i'));
}

function range(a, b) {
    const out = [];
    for (let i = a; i <= b; i++) out.push(i);
    return out;
}

function addSpan(parent, text) {
    const el = document.createElement('span');
    el.textContent = text;
    parent.appendChild(el);
}

// symbol table, 28 x 8
const rows = [
    ' !″#$%&’()*+,-./0123456789:;',
    '<=>?@ABCDEFGHIJKLMNOPQRSTUVW',
    'XYZ[\\]ˆ_`abcdefghijklmnopqrs',
    'tuvwxyz{|}˜ ü＿| ©™⋯',
    '', '', '', ''
];
const table = document.getElementById('symbols');
rows.forEach((row, r) => {
    const tr = table.insertRow();
    for (let i = 0; i < 28; i++) {
        const td = tr.insertCell();
        td.textContent = row[i] || '';
        if (r === 3 && (i === 12 || i === 14)) td.className = 'left';
    }
});

// page thumbnails: text = [y, x1, x2], rules = table lines
const pages = [
    {
        no: 13,
        text: [[84], [88, 34, 134], [129, 28, 72], [132], [138, 34, 75], [182], [186, 34, 46], [192, 28, 72], [197, 34, 69],
            [200, 40, 155], [206, 40, 155], [210, 40, 110], [216, 34, 98], [221, 40, 155], [225, 40, 113], [231, 40, 155]],
        light: [[93, 80, 150], [98, 40, 150], [103, 60, 140], [108, 60, 145], [113, 60, 140], [117, 58, 142], [121, 60, 140],
            [143, 76, 149], [150, 70, 153], [158, 42, 150], [163, 42, 150], [167, 36, 150], [172, 36, 150], [177, 42, 150]],
        rules: 'M34 95h120M34 101h120M34 105h120M34 111h120M34 115h120M34 119h120M34 123h120M53 95v28M93 95v28' +
            'M34 145h120M34 155h120M34 161h120M34 165h120M34 169h120M34 175h120M34 179h120M62 145v34M79 145v34M92 145v34M109 145v34M123 145v34M139 145v34M34 147l28 8'
    },
    {
        no: 14,
        text: [[24, 40, 155], [30, 40, 117], [220, 40, 155], [226, 40, 134], [230, 40, 155]],
        light: [[34, 70, 149], [40, 108, 126], [41, 46, 70], [50, 54, 150], [55, 54, 150], [60, 54, 150], [65, 54, 150], [69, 54, 150], [74, 54, 150], [79, 42, 150], [84, 42, 150], [89, 48, 150],
            [93, 42, 122], [103, 66, 149], [109, 70, 146], [118, 58, 153], [122, 58, 153], [133, 44, 153], [137, 30, 153], [145, 30, 153], [150, 44, 153], [160, 44, 153], [169, 30, 153], [172, 44, 153], [180, 44, 153], [185, 44, 153],
            [191, 30, 154], [195, 36, 60], [199], [201], [205, 34, 145], [209, 34, 115], [213, 34, 85], [217, 34, 125]],
        rules: 'M34 36h120M79 43h75M34 46h120M34 53h120M34 57h120M34 63h120M34 67h120M34 71h120M34 77h120M34 81h120M34 87h120M34 91h120M79 36v55M105 43v48M129 43v48' +
            'M28 106h126M57 112h97M28 126h126M39 130h115M39 140h115M28 155h126M39 164h115M39 174h115M28 188h126' +
            'M57 106v82M39 126v62M67 112v76M79 112v76M89 106v82M101 112v76M111 112v76M121 106v82M133 112v76M143 112v76M29 108l28 18'
    },
    {
        no: 15,
        text: [[24, 41, 116], [28, 41, 155], [34, 41, 76], [40, 41, 130], [45, 28, 57], [48, 28, 78], [54, 28, 57], [58], [64], [68], [74], [78], [84], [88], [92, 34, 80],
            [96, 28, 55], [100], [106], [111], [116], [120], [124], [130, 34, 80], [134], [140], [145, 34, 86], [149, 28, 50], [153], [158], [162], [168], [172, 34, 95], [176],
            [182, 34, 76], [186, 34, 77], [192, 34, 72], [196, 40, 155], [201, 40, 155], [206, 40, 60], [210, 34, 77], [214, 40, 155], [220, 40, 155], [225, 40, 155], [230, 40, 155]]
    },
    {
        no: 16,
        text: [[24, 40, 155], [30, 40, 56], [34, 40, 155], [40, 40, 86], [44, 28, 59], [48], [54], [58], [62, 34, 46], [66], [72], [76], [82], [86, 34, 46], [92, 28, 50],
            [96], [102], [107], [111], [116], [120], [124, 34, 88], [130, 28, 54], [134], [140], [144, 34, 140], [148], [154], [158], [164], [168, 34, 135], [172, 28, 50],
            [176], [182], [186], [192], [197], [202, 34, 44], [206], [212], [216, 34, 130], [220, 28, 48], [224, 34, 77], [230, 40, 155]]
    },
    {
        no: 17,
        text: [[24, 40, 155], [30, 40, 86], [34, 34, 53], [38, 40, 155], [44, 40, 155], [48, 40, 96], [54, 42, 74], [58, 42, 82], [62, 28, 49], [66], [72], [78, 34, 100], [82], [86, 34, 84]]
    }
];

// each line starts at another place in the dash pattern, so words do not form columns
function lines(list, width, color, dash) {
    return list.map(([y, a = 34, b = 155]) =>
        `<path d="M${a} ${y}H${b}" stroke="${color}" stroke-width="${width}" stroke-dasharray="${dash}" stroke-dashoffset="${y * 7 % 31}"/>`
    ).join('');
}

document.getElementById('thumbs').innerHTML = pages.map(p => `
    <div class="thumb${p.no === 17 ? ' current' : ''}">
        <svg viewBox="1 1 178 254">
            ${lines(p.text, 3, '#757575', '9 .5 6 .4 13 1.5 4 .5')}
            ${lines(p.light || [], 1, '#8a8a8a', '4 3 2 2 5 4')}
            <path d="${p.rules || ''}" fill="none" stroke="#000" stroke-width="2"/>
        </svg>
        ${p.no}
    </div>`).join('');

const font = document.getElementById('font');
font.focus();
font.select();
```
